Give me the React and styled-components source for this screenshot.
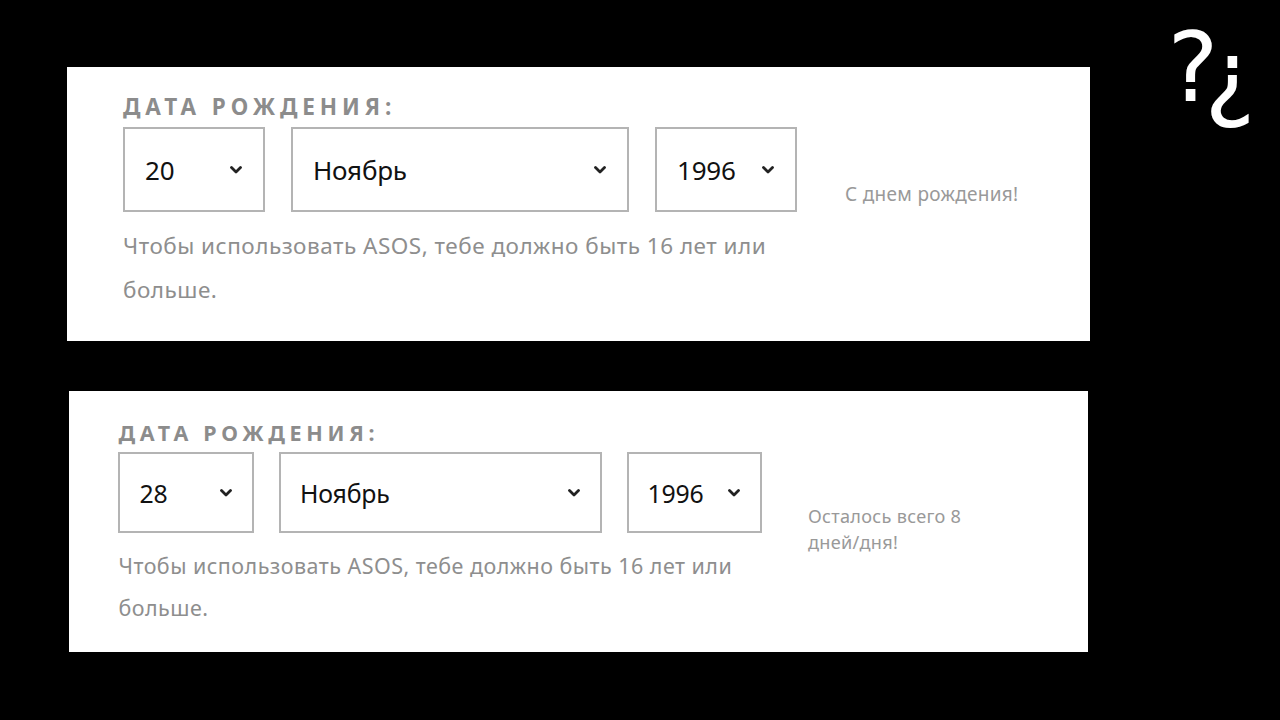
import React from "react";
import styled, { createGlobalStyle } from "styled-components";

const GlobalStyle = createGlobalStyle`
  html, body {
    margin: 0;
    padding: 0;
    background: #000;
  }
  body {
    font-family: "Noto Sans", "Open Sans", sans-serif;
  }
`;

const cards = [
  {
    id: "a",
    k: 1,
    width: 1023,
    offset: 67,
    top: 67,
    padTop: 20,
    padBottom: 29,
    day: "20",
    message: "С днем рождения!",
  },
  {
    id: "b",
    k: 0.955,
    width: 1019,
    offset: 69,
    top: 50,
    padTop: 23,
    padBottom: 23,
    day: "28",
    message: "Осталось всего 8 дней/дня!",
  },
];

const Chevron = () => (
  <svg width="12" height="8" viewBox="0 0 12 8">
    <path
      d="M1.5 1.5 L6 6 L10.5 1.5"
      fill="none"
      stroke="#222"
      strokeWidth="2.8"
      strokeLinecap="round"
      strokeLinejoin="round"
    />
  </svg>
);

const DateSelect = ({ k, width, value }) => (
  <SelectBox $k={k} style={{ width: width * k }}>
    <SelectValue $k={k}>{value}</SelectValue>
    <Chevron />
  </SelectBox>
);

const BirthdayCard = ({ card }) => {
  const { k } = card;
  return (
    <Card
      $k={k}
      $top={card.padTop}
      $bottom={card.padBottom}
      style={{ width: card.width, marginLeft: card.offset, marginTop: card.top }}
    >
      <Label $k={k}>Дата рождения:</Label>
      <Row $k={k}>
        <DateSelect k={k} width={142} value={card.day} />
        <DateSelect k={k} width={338} value="Ноябрь" />
        <DateSelect k={k} width={142} value="1996" />
        <Message $k={k}>{card.message}</Message>
      </Row>
      <Hint $k={k}>
        Чтобы использовать ASOS, тебе должно быть 16 лет или больше.
      </Hint>
    </Card>
  );
};

export default function App() {
  return (
    <>
      <GlobalStyle />
      <Page>
        <Cards>
          {cards.map((card) => (
            <BirthdayCard key={card.id} card={card} />
          ))}
        </Cards>
        <Logo>
          <Mark $w={34}>?</Mark>
          <Mark $w={40} $down>¿</Mark>
        </Logo>
      </Page>
    </>
  );
}

const Page = styled.div`
  width: 1280px;
  height: 720px;
  background: #000;
  display: flex;
  overflow: hidden;
`;

const Cards = styled.div`
  display: flex;
  flex-direction: column;
`;

const Card = styled.section`
  background: #fff;
  box-sizing: border-box;
  padding: ${(p) => p.$top}px 0 ${(p) => p.$bottom}px ${(p) => 56 * p.$k - (p.$k < 1 ? 4 : 0)}px;
`;

const Label = styled.h3`
  margin: 0;
  font-family: "Noto Sans", sans-serif;
  font-weight: 700;
  text-transform: uppercase;
  color: #8c8c8c;
  font-size: ${(p) => 22.5 * p.$k}px;
  letter-spacing: ${(p) => 4.9 * p.$k}px;
  line-height: ${(p) => 40 * p.$k}px;
`;

const Row = styled.div`
  display: flex;
  align-items: flex-start;
  gap: ${(p) => 26 * p.$k}px;
`;

const SelectBox = styled.div`
  box-sizing: border-box;
  height: ${(p) => 85 * p.$k}px;
  border: 2px solid #b4b4b4;
  display: flex;
  align-items: center;
  justify-content: space-between;
  padding: 0 ${(p) => 21 * p.$k}px 0 ${(p) => 20 * p.$k}px;
`;

const SelectValue = styled.span`
  font-size: ${(p) => 26 * p.$k}px;
  color: #111;
  letter-spacing: -0.2px;
`;

const Message = styled.p`
  margin: ${(p) => 54 * p.$k}px 0 ${(p) => -40 * p.$k}px ${(p) => 22 * p.$k}px;
  width: ${(p) => 200 * p.$k}px;
  font-size: ${(p) => 19 * p.$k}px;
  letter-spacing: ${(p) => 0.3 * p.$k}px;
  line-height: ${(p) => 27 * p.$k}px;
  color: #999;
`;

const Hint = styled.p`
  margin: ${(p) => 12 * p.$k}px 0 0;
  max-width: ${(p) => 670 * p.$k}px;
  font-size: ${(p) => 22.5 * p.$k}px;
  letter-spacing: ${(p) => 0.5 * p.$k}px;
  line-height: ${(p) => 44 * p.$k}px;
  color: #8e8e8e;
`;

const Logo = styled.div`
  display: flex;
  margin: 20px 0 0 86px;
`;

const Mark = styled.span`
  display: flex;
  justify-content: center;
  width: ${(p) => p.$w}px;
  font-family: "DejaVu Sans", sans-serif;
  color: #fff;
  font-size: 96px;
  line-height: 1;
  height: 100px;
  margin-top: ${(p) => (p.$down ? 8 : 0)}px;
`;
